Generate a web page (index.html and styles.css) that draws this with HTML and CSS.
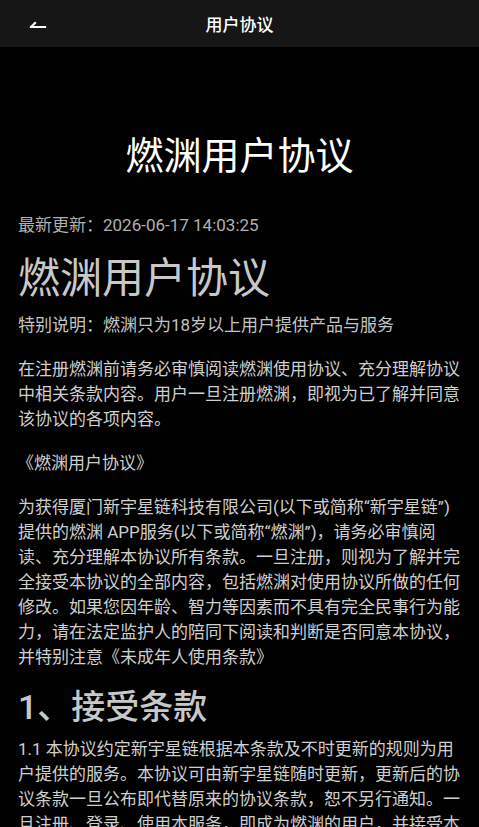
FILE: index.html
```html
<!DOCTYPE html>
<html lang="zh-CN">
<head>
    <meta charset="UTF-8">
    <meta name="viewport" content="width=device-width, initial-scale=1.0">
    <title>用户协议</title>
    <link rel="stylesheet" href="styles.css">
</head>
<body>
    <header class="topbar">
        <button class="back" aria-label="返回">
            <svg width="20" height="20" viewBox="0 0 20 20">
                <path d="M3 15 H17 M3 15 L7 11" stroke="#fff" stroke-width="2.2" fill="none" stroke-linecap="square"/>
            </svg>
        </button>
        <h1 class="topbar-title">用户协议</h1>
    </header>

    <main class="doc">
        <h2 class="doc-title">燃渊用户协议</h2>
        <p class="updated">最新更新：2026-06-17 14:03:25</p>

        <h3 class="heading-lg">燃渊用户协议</h3>
        <p class="note">特别说明：燃渊只为18岁以上用户提供产品与服务</p>

        <p>在注册燃渊前请务必审慎阅读燃渊使用协议、充分理解协议中相关条款内容。用户一旦注册燃渊，即视为已了解并同意该协议的各项内容。</p>

        <p class="book">《燃渊用户协议》</p>

        <p>为获得厦门新宇星链科技有限公司(以下或简称“新宇星链”)提供的燃渊 APP服务(以下或简称“燃渊”)，请务必审慎阅读、充分理解本协议所有条款。一旦注册，则视为了解并完全接受本协议的全部内容，包括燃渊对使用协议所做的任何修改。如果您因年龄、智力等因素而不具有完全民事行为能力，请在法定监护人的陪同下阅读和判断是否同意本协议，并特别注意《未成年人使用条款》</p>

        <h3 class="heading-md">1、接受条款</h3>
        <p class="clause">1.1 本协议约定新宇星链根据本条款及不时更新的规则为用户提供的服务。本协议可由新宇星链随时更新，更新后的协议条款一旦公布即代替原来的协议条款，恕不另行通知。一旦注册、登录、使用本服务，即成为燃渊的用户，并接受本协议的全部条款。</p>
    </main>
</body>
</html>
```

FILE: styles.css
```css
* {
    margin: 0;
    padding: 0;
    box-sizing: border-box;
}

body {
    font-family: Roboto, "Noto Sans CJK SC", sans-serif;
    background: #000;
    color: #cfcfcf;
}

.topbar {
    position: relative;
    height: 47px;
    padding-top: 3px;
    background: #161616;
    display: flex;
    align-items: center;
    justify-content: center;
}

.back {
    position: absolute;
    left: 28px;
    top: 12px;
    width: 20px;
    height: 20px;
    background: none;
    border: none;
}

.topbar-title {
    color: #fff;
    font-size: 17px;
    font-weight: 500;
    line-height: 1;
}

.doc {
    padding: 0 18px;
}

.doc-title {
    margin-top: 85px;
    text-align: center;
    color: #fff;
    font-size: 38px;
    font-weight: 400;
    line-height: 49px;
}

.updated {
    margin-top: 32px;
    color: #b0b0b0;
    font-size: 17px;
    line-height: 25px;
}

.heading-lg {
    margin-top: 15px;
    color: #c8c8c8;
    font-size: 42px;
    font-weight: 400;
    line-height: 52px;
}

p {
    font-size: 17px;
    line-height: 25px;
    margin-top: 19px;
}

.note {
    margin-top: 8px;
    color: #c4c4c4;
}

.book {
    margin-left: -1px;
}

.heading-md {
    margin-top: 15px;
    color: #c8c8c8;
    font-size: 34px;
    font-weight: 500;
    line-height: 44px;
}

.clause {
    margin-top: 8px;
}
```
